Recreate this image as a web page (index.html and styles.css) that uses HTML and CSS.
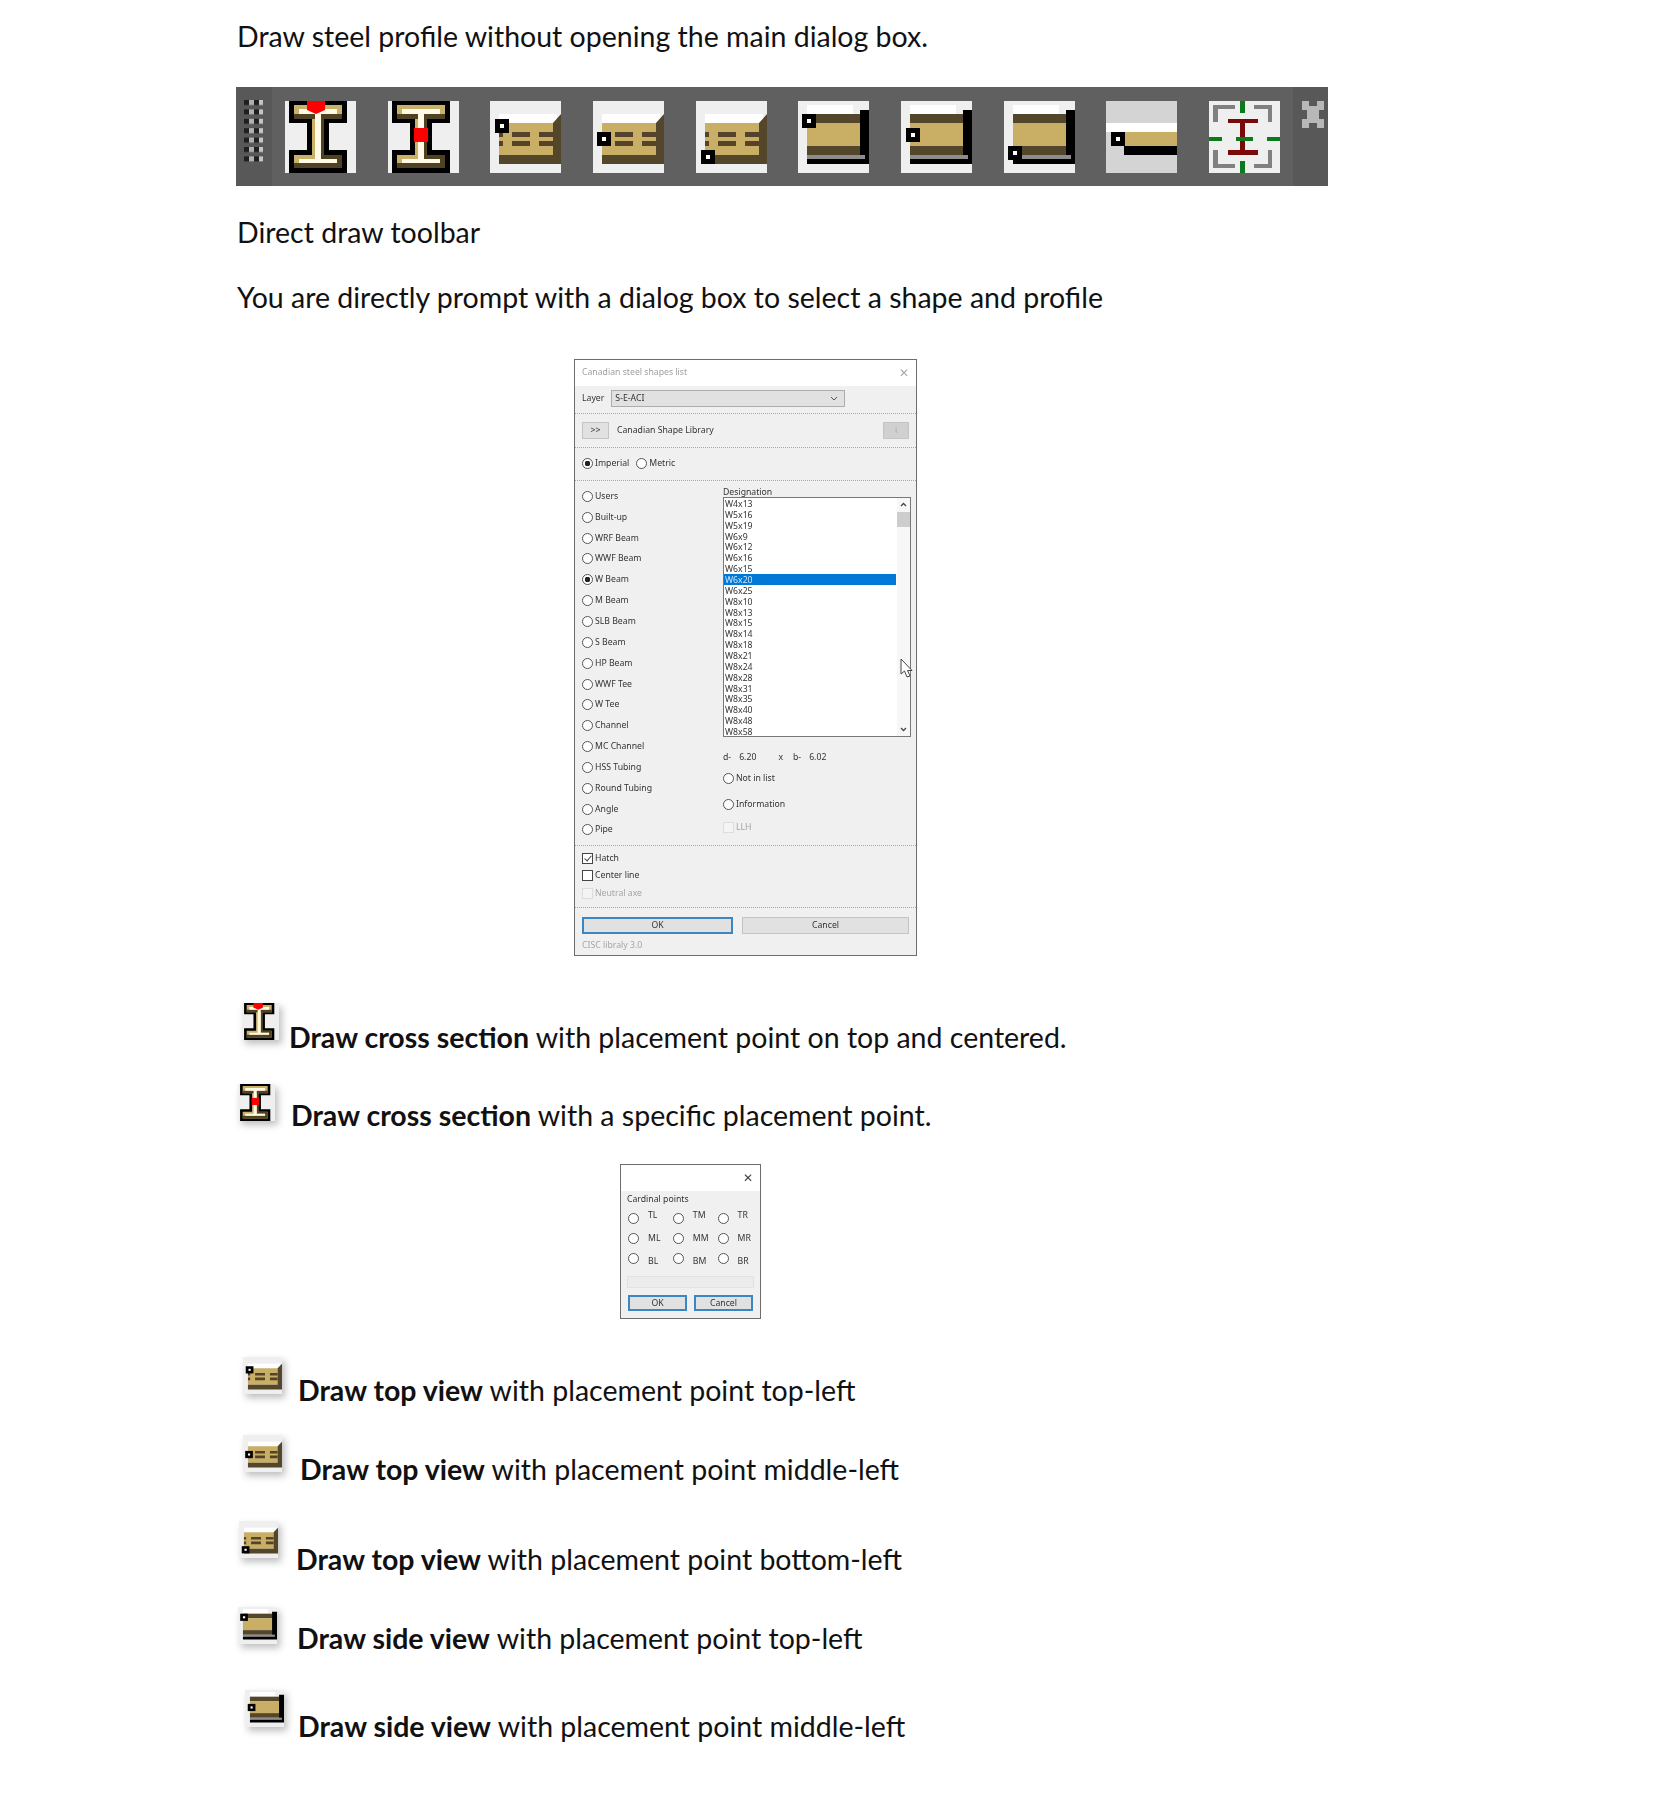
FILE: index.html
```html
<!DOCTYPE html>
<html lang="en">
<head>
    <meta charset="UTF-8" />
    <meta name="viewport" content="width=device-width, initial-scale=1" />
    <title>Direct draw toolbar</title>
    <link rel="stylesheet" href="styles.css">
</head>
<body>

<svg class="defs" width="0" height="0">
    <defs>
        <g id="beam">
            <rect width="71" height="72" fill="#efefef"/>
            <path d="M4 0H62V22H44V49H62V72H4V49H22V22H4Z" fill="#000"/>
            <path d="M9 4H57V18H39V54H57V67H9V54H27V18H9Z" fill="#c9b16a"/>
            <path d="M9 13H57V18H39V54H57V67H9V62H52V58H36V18H9Z" fill="#4f4223"/>
            <path d="M14 8H52V13H36V58H52V62H14V58H30V13H14Z" fill="#fff9e6"/>
        </g>
        <g id="top-base">
            <rect width="71" height="72" fill="#efefef"/>
            <rect x="9" y="13" width="58" height="9" fill="#fff"/>
            <rect x="9" y="22" width="54" height="32" fill="#c9ae66"/>
            <path d="M63 22L71 13V63H9V54H63Z" fill="#54462a"/>
            <path d="M9 31H13V36H9ZM22 31H40V36H22ZM49 31H63V36H49ZM9 40H13V45H9ZM22 40H40V45H22ZM49 40H63V45H49Z" fill="#54432a"/>
        </g>
        <g id="side-base">
            <rect width="71" height="72" fill="#efefef"/>
            <rect x="9" y="4" width="46" height="9" fill="#fff"/>
            <rect x="9" y="13" width="53" height="9" fill="#54462a"/>
            <rect x="9" y="22" width="53" height="23" fill="#c9ae66"/>
            <rect x="9" y="45" width="53" height="9" fill="#54462a"/>
            <rect x="9" y="54" width="58" height="4" fill="#8c8c8c"/>
            <path d="M62 9H71V63H9V58H67V54H62Z" fill="#000"/>
        </g>
        <g id="mark">
            <rect width="14" height="14" fill="#000"/>
            <rect x="5" y="5" width="4" height="4" fill="#fff"/>
        </g>

        <symbol id="i-beam-top" viewBox="0 0 71 72" preserveAspectRatio="none">
            <use href="#beam"/>
            <path d="M22 0H40V9L31 13L22 9Z" fill="#f00"/>
        </symbol>
        <symbol id="i-beam-mid" viewBox="0 0 71 72" preserveAspectRatio="none">
            <use href="#beam"/>
            <rect x="26" y="27" width="14" height="14" fill="#f00"/>
        </symbol>
        <symbol id="i-top-tl" viewBox="0 0 71 72" preserveAspectRatio="none">
            <use href="#top-base"/><use href="#mark" x="5" y="18"/>
        </symbol>
        <symbol id="i-top-ml" viewBox="0 0 71 72" preserveAspectRatio="none">
            <use href="#top-base"/><use href="#mark" x="4" y="31"/>
        </symbol>
        <symbol id="i-top-bl" viewBox="0 0 71 72" preserveAspectRatio="none">
            <use href="#top-base"/><use href="#mark" x="5" y="49"/>
        </symbol>
        <symbol id="i-side-tl" viewBox="0 0 71 72" preserveAspectRatio="none">
            <use href="#side-base"/><use href="#mark" x="4" y="13"/>
        </symbol>
        <symbol id="i-side-ml" viewBox="0 0 71 72" preserveAspectRatio="none">
            <use href="#side-base"/><use href="#mark" x="5" y="27"/>
        </symbol>
        <symbol id="i-side-bl" viewBox="0 0 71 72" preserveAspectRatio="none">
            <use href="#side-base"/><use href="#mark" x="4" y="45"/>
        </symbol>
        <symbol id="i-plan" viewBox="0 0 71 72" preserveAspectRatio="none">
            <rect width="71" height="72" fill="#d4d4d4"/>
            <rect y="22" width="71" height="9" fill="#fff"/>
            <rect x="18" y="31" width="53" height="14" fill="#c9ae66"/>
            <rect x="18" y="45" width="53" height="9" fill="#000"/>
            <use href="#mark" x="5" y="31"/>
        </symbol>
        <symbol id="i-center" viewBox="0 0 71 72" preserveAspectRatio="none">
            <rect width="71" height="72" fill="#efefef"/>
            <path d="M4 4H26V8H9V21H4ZM45 4H63V21H59V8H45ZM4 49H9V63H26V67H4ZM59 49H63V67H45V63H59Z" fill="#808080"/>
            <path d="M19 18H49V22H36V49H49V54H19V49H31V22H19Z" fill="#7a0a0a"/>
            <path d="M31 0H36V12H31ZM31 60H36V72H31ZM0 36H13V40H0ZM27 36H44V40H27ZM58 36H71V40H58Z" fill="#0b7a1c"/>
        </symbol>
        <pattern id="grip-dots" width="19" height="9.4" patternUnits="userSpaceOnUse">
            <rect width="5" height="5" fill="#1f1f1f"/>
            <rect x="5" width="5" height="5" fill="#b0b0b0"/>
            <rect x="10" width="5" height="5" fill="#1f1f1f"/>
            <rect x="15" width="4" height="5" fill="#c4c4c4"/>
        </pattern>
    </defs>
</svg>

<main class="page">
    <p class="line first">Draw steel profile without opening the main dialog box.</p>

    <div class="toolbar">
        <div class="grip">
            <svg width="19" height="62"><rect width="19" height="62" fill="url(#grip-dots)"/></svg>
        </div>
        <div class="tools">
            <svg class="tool"><use href="#i-beam-top"/></svg>
            <svg class="tool"><use href="#i-beam-mid"/></svg>
            <svg class="tool"><use href="#i-top-tl"/></svg>
            <svg class="tool"><use href="#i-top-ml"/></svg>
            <svg class="tool"><use href="#i-top-bl"/></svg>
            <svg class="tool"><use href="#i-side-tl"/></svg>
            <svg class="tool"><use href="#i-side-ml"/></svg>
            <svg class="tool"><use href="#i-side-bl"/></svg>
            <svg class="tool"><use href="#i-plan"/></svg>
            <svg class="tool"><use href="#i-center"/></svg>
        </div>
        <div class="bar-end">
            <svg width="22" height="27" viewBox="0 0 22 27"><path d="M0 0H7V5H15V0H22V9H17V18H22V27H15V22H7V27H0V18H5V9H0Z" fill="#b8b8b8"/></svg>
        </div>
    </div>

    <p class="line caption">Direct draw toolbar</p>
    <p class="line prompt">You are directly prompt with a dialog box to select a shape and profile</p>

    <!-- main dialog -->
    <div class="dialog steel">
        <div class="dlg-title">
            <span>Canadian steel shapes list</span>
            <span class="close muted">✕</span>
        </div>
        <div class="sect layer-row">
            <span>Layer</span>
            <div class="select">S-E-ACI
                <svg width="8" height="5" viewBox="0 0 8 5"><path d="M1 1L4 4L7 1" fill="none" stroke="#555"/></svg>
            </div>
        </div>
        <div class="sect lib-row">
            <span class="btn small">&gt;&gt;</span>
            <span>Canadian Shape Library</span>
            <span class="btn info">i</span>
        </div>
        <div class="sect unit-row">
            <label class="opt"><i class="radio on"></i>Imperial</label>
            <label class="opt"><i class="radio"></i>Metric</label>
        </div>
        <div class="sect shape-area">
            <div class="shape-types">
                <label class="opt"><i class="radio"></i>Users</label>
                <label class="opt"><i class="radio"></i>Built-up</label>
                <label class="opt"><i class="radio"></i>WRF Beam</label>
                <label class="opt"><i class="radio"></i>WWF Beam</label>
                <label class="opt"><i class="radio on"></i>W Beam</label>
                <label class="opt"><i class="radio"></i>M Beam</label>
                <label class="opt"><i class="radio"></i>SLB Beam</label>
                <label class="opt"><i class="radio"></i>S Beam</label>
                <label class="opt"><i class="radio"></i>HP Beam</label>
                <label class="opt"><i class="radio"></i>WWF Tee</label>
                <label class="opt"><i class="radio"></i>W Tee</label>
                <label class="opt"><i class="radio"></i>Channel</label>
                <label class="opt"><i class="radio"></i>MC Channel</label>
                <label class="opt"><i class="radio"></i>HSS Tubing</label>
                <label class="opt"><i class="radio"></i>Round Tubing</label>
                <label class="opt"><i class="radio"></i>Angle</label>
                <label class="opt"><i class="radio"></i>Pipe</label>
            </div>
            <div class="shape-side">
                <div class="list-label">Designation</div>
                <div class="listbox">
                    <ul class="items">
                        <li>W4x13</li><li>W5x16</li><li>W5x19</li><li>W6x9</li><li>W6x12</li><li>W6x16</li>
                        <li>W6x15</li><li class="sel">W6x20</li><li>W6x25</li><li>W8x10</li><li>W8x13</li>
                        <li>W8x15</li><li>W8x14</li><li>W8x18</li><li>W8x21</li><li>W8x24</li><li>W8x28</li>
                        <li>W8x31</li><li>W8x35</li><li>W8x40</li><li>W8x48</li><li>W8x58</li>
                    </ul>
                    <div class="scroll">
                        <svg width="13" height="14" viewBox="0 0 13 14"><path d="M4 8L6.5 5.5L9 8" fill="none" stroke="#444" stroke-width="1.3"/></svg>
                        <div class="thumb"></div>
                        <svg class="down" width="13" height="14" viewBox="0 0 13 14"><path d="M4 6L6.5 8.5L9 6" fill="none" stroke="#444" stroke-width="1.3"/></svg>
                    </div>
                </div>
                <div class="dims"><span>d-</span><span>6.20</span><span class="x">x</span><span>b-</span><span>6.02</span></div>
                <label class="opt not-list"><i class="radio"></i>Not in list</label>
                <label class="opt info-opt"><i class="radio"></i>Information</label>
                <label class="opt llh muted"><i class="check off"></i>LLH</label>
            </div>
        </div>
        <div class="sect checks">
            <label class="opt"><i class="check on"></i>Hatch</label>
            <label class="opt"><i class="check"></i>Center line</label>
            <label class="opt muted"><i class="check off"></i>Neutral axe</label>
        </div>
        <div class="actions">
            <span class="btn ok">OK</span>
            <span class="btn cancel">Cancel</span>
        </div>
        <div class="version muted">CISC libraly 3.0</div>
        <svg class="cursor" width="14" height="21" viewBox="0 0 14 21"><path d="M1 1V16L4.5 13L7 19L10 18L7.5 12.5H12Z" fill="#fff" stroke="#444"/></svg>
    </div>

    <div class="row row-1">
        <svg class="mini"><use href="#i-beam-top"/></svg>
        <p class="line"><b>Draw cross section</b> with placement point on top and centered.</p>
    </div>
    <div class="row row-2">
        <svg class="mini"><use href="#i-beam-mid"/></svg>
        <p class="line"><b>Draw cross section</b> with a specific placement point.</p>
    </div>

    <!-- cardinal points dialog -->
    <div class="dialog cardinal">
        <div class="dlg-title blank"><span class="close">✕</span></div>
        <div class="card-body">
            <div class="card-label">Cardinal points</div>
            <div class="card-grid">
                <label class="pt pt-up"><i class="radio"></i>TL</label>
                <label class="pt pt-up"><i class="radio"></i>TM</label>
                <label class="pt pt-up"><i class="radio"></i>TR</label>
                <label class="pt"><i class="radio"></i>ML</label>
                <label class="pt"><i class="radio"></i>MM</label>
                <label class="pt"><i class="radio"></i>MR</label>
                <label class="pt pt-low"><i class="radio"></i>BL</label>
                <label class="pt pt-low"><i class="radio"></i>BM</label>
                <label class="pt pt-low"><i class="radio"></i>BR</label>
            </div>
            <div class="card-field"></div>
            <div class="card-actions">
                <span class="btn ok">OK</span>
                <span class="btn ok">Cancel</span>
            </div>
        </div>
    </div>

    <div class="row row-3">
        <svg class="mini wide"><use href="#i-top-tl"/></svg>
        <p class="line"><b>Draw top view</b> with placement point top-left</p>
    </div>
    <div class="row row-4">
        <svg class="mini wide"><use href="#i-top-ml"/></svg>
        <p class="line"><b>Draw top view</b> with placement point middle-left</p>
    </div>
    <div class="row row-5">
        <svg class="mini wide"><use href="#i-top-bl"/></svg>
        <p class="line"><b>Draw top view</b> with placement point bottom-left</p>
    </div>
    <div class="row row-6">
        <svg class="mini wide"><use href="#i-side-tl"/></svg>
        <p class="line"><b>Draw side view</b> with placement point top-left</p>
    </div>
    <div class="row row-7">
        <svg class="mini wide"><use href="#i-side-ml"/></svg>
        <p class="line"><b>Draw side view</b> with placement point middle-left</p>
    </div>
</main>

</body>
</html>
```

FILE: styles.css
```css
body {
    margin: 0;
    background-color: #fff;
    color: #111;
    font-family: Lato, "Liberation Sans", sans-serif;
}
.defs {
    position: absolute;
}
.page {
    padding: 20px 0 0 237px;
}
.line {
    margin: 0;
    font-size: 28.5px;
    line-height: 32px;
    white-space: nowrap;
}
.caption {
    margin-top: 30px;
}
.prompt {
    margin-top: 33px;
}

/* Toolbar */
.toolbar {
    display: flex;
    width: 1092px;
    height: 99px;
    margin: 35px 0 0 -1px;
    background-color: #606060;
}
.grip {
    width: 36px;
    padding: 13px 0 0 8px;
    box-sizing: border-box;
    background-color: #585858;
}
.tools {
    flex: 1;
    display: flex;
    justify-content: space-between;
    align-items: center;
    padding: 0 13px;
}
.tool {
    width: 71px;
    height: 72px;
}
.bar-end {
    width: 35px;
    padding: 14px 0 0 9px;
    box-sizing: border-box;
    background-color: #585858;
}

/* Dialogs */
.dialog {
    position: relative;
    box-sizing: border-box;
    border: 1px solid #6d6d6d;
    background-color: #f0f0f0;
    color: #333;
    font-family: "Noto Sans", sans-serif;
    font-size: 8.7px;
    line-height: 11px;
    filter: blur(0.3px);
}
.steel {
    width: 343px;
    height: 597px;
    margin: 46px 0 0 337px;
}
.dlg-title {
    display: flex;
    justify-content: space-between;
    align-items: center;
    box-sizing: border-box;
    height: 26px;
    padding: 0 7px 2px;
    background-color: #fff;
    color: #a0a0a0;
}
.close {
    margin-left: auto;
    font-size: 12px;
    color: #444;
}
.close.muted {
    color: #aaa;
}
.muted {
    color: #a5a5a5;
}
.sect {
    box-sizing: border-box;
    border-bottom: 1px dotted #a8a8a8;
}
.layer-row {
    display: flex;
    align-items: center;
    gap: 7px;
    height: 28px;
    padding: 0 7px 2px;
}
.select {
    display: flex;
    justify-content: space-between;
    align-items: center;
    box-sizing: border-box;
    width: 234px;
    height: 17px;
    padding: 0 6px 0 3px;
    background-color: #e1e1e1;
    border: 1px solid #adadad;
}
.lib-row {
    display: flex;
    align-items: center;
    height: 34px;
    padding: 0 7px;
}
.lib-row span:nth-child(2) {
    margin-left: 8px;
}
.btn {
    display: flex;
    justify-content: center;
    align-items: center;
    box-sizing: border-box;
    height: 17px;
    background-color: #e1e1e1;
    border: 1px solid #c4c4c4;
}
.btn.small {
    width: 27px;
}
.btn.info {
    width: 26px;
    margin-left: auto;
    background-color: #d0d0d0;
    color: #aaa;
}
.unit-row {
    display: flex;
    gap: 7px;
    align-items: center;
    height: 33px;
    padding: 0 0 2px 7px;
}
.opt {
    display: flex;
    align-items: center;
    gap: 2px;
}
.radio {
    flex: none;
    display: block;
    box-sizing: border-box;
    width: 11px;
    height: 11px;
    border: 1px solid #555;
    border-radius: 50%;
    background-color: #fff;
}
.radio.on {
    background: radial-gradient(circle, #222 0 2.6px, #fff 3px);
}
.check {
    flex: none;
    display: block;
    position: relative;
    box-sizing: border-box;
    width: 11px;
    height: 11px;
    border: 1px solid #444;
    background-color: #fff;
}
.check.off {
    border-color: #ddd;
    background-color: #f4f4f4;
}
.check.on::after {
    content: "";
    position: absolute;
    left: 3px;
    top: 0;
    width: 3px;
    height: 6px;
    border: solid #444;
    border-width: 0 1px 1px 0;
    transform: rotate(40deg);
}
.shape-area {
    display: flex;
    height: 365px;
}
.shape-types {
    width: 148px;
    padding: 5px 0 0 7px;
    box-sizing: border-box;
}
.shape-types .opt {
    height: 20.85px;
}
.shape-side {
    width: 188px;
    padding-top: 6px;
}
.list-label {
    height: 10px;
    line-height: 10px;
}
.listbox {
    display: flex;
    box-sizing: border-box;
    width: 188px;
    height: 240px;
    background-color: #fff;
    border: 1px solid #777;
}
.items {
    flex: 1;
    margin: 0;
    padding: 0;
    list-style: none;
}
.items li {
    height: 10.87px;
    line-height: 12px;
    padding-left: 1px;
    margin-right: 1px;
}
.items .sel {
    background-color: #0078d7;
    color: #cfe4f7;
}
.scroll {
    display: flex;
    flex-direction: column;
    width: 13px;
    background-color: #f7f7f7;
}
.thumb {
    height: 15px;
    background-color: #cdcdcd;
}
.down {
    margin-top: auto;
}
.dims {
    display: flex;
    margin-top: 15px;
}
.dims span:nth-child(2) {
    margin-left: 8px;
}
.dims .x {
    margin-left: 22px;
}
.dims span:nth-child(4) {
    margin-left: 10px;
}
.dims span:nth-child(5) {
    margin-left: 8px;
}
.not-list {
    margin-top: 10px;
}
.info-opt {
    margin-top: 15px;
}
.llh {
    margin-top: 12px;
}
.checks {
    height: 62px;
    padding: 4px 0 0 7px;
}
.checks .opt {
    height: 17.3px;
}
.actions {
    display: flex;
    gap: 9px;
    padding: 9px 7px 0;
}
.btn.ok {
    border: 2px solid #3a87c4;
}
.actions .ok {
    width: 152px;
}
.actions .cancel {
    width: 168px;
}
.version {
    padding: 6px 0 0 7px;
}
.cursor {
    position: absolute;
    left: 325px;
    top: 298px;
}

/* Cardinal points */
.cardinal {
    width: 141px;
    height: 155px;
    margin: 33px 0 0 383px;
}
.blank {
    height: 26px;
}
.card-body {
    padding: 3px 6px 0;
}
.card-label {
    height: 13px;
}
.card-grid {
    display: grid;
    grid-template-columns: repeat(3, 44.8px);
    grid-auto-rows: 21px;
}
.pt {
    display: flex;
    align-items: center;
    gap: 9px;
    height: 21px;
    padding-left: 1px;
    box-sizing: border-box;
}
.pt-up {
    padding-bottom: 4px;
}
.pt-up .radio {
    margin-top: 6px;
}
.pt-low .radio {
    margin-top: -5px;
}
.pt-low {
    padding-top: 3px;
}
.card-field {
    height: 12px;
    margin-top: 6px;
    background-color: #ececec;
    border: 1px solid #e2e2e2;
    box-sizing: border-box;
}
.card-actions {
    display: flex;
    justify-content: space-between;
    padding: 7px 1px 0;
}
.card-actions .ok {
    width: 59px;
    height: 16px;
}

/* Icon + text rows */
.row {
    display: flex;
    align-items: flex-end;
}
.mini {
    flex: none;
    width: 37px;
    height: 37px;
    box-shadow: 3px 4px 7px rgba(0, 0, 0, 0.25);
}
.mini.wide {
    width: 39px;
}
.row-1 { margin-top: 47px; }
.row-1 .mini { margin: 0 10px 13px 5px; }
.row-2 { margin-top: 31px; }
.row-2 .mini { margin: 0 16px 10px 1px; }
.row-3 { margin-top: 38px; }
.row-3 .mini { margin: 0 16px 12px 6px; }
.row-4 { margin-top: 29px; }
.row-4 .mini { margin: 0 18px 13px 6px; }
.row-5 { margin-top: 36px; }
.row-5 .mini { margin: 0 18px 17px 2px; }
.row-6 { margin-top: 31.5px; }
.row-6 .mini { margin: 0 20px 10px 1px; }
.row-7 { margin-top: 36px; }
.row-7 .mini { margin: 0 14px 15px 8px; }
```
